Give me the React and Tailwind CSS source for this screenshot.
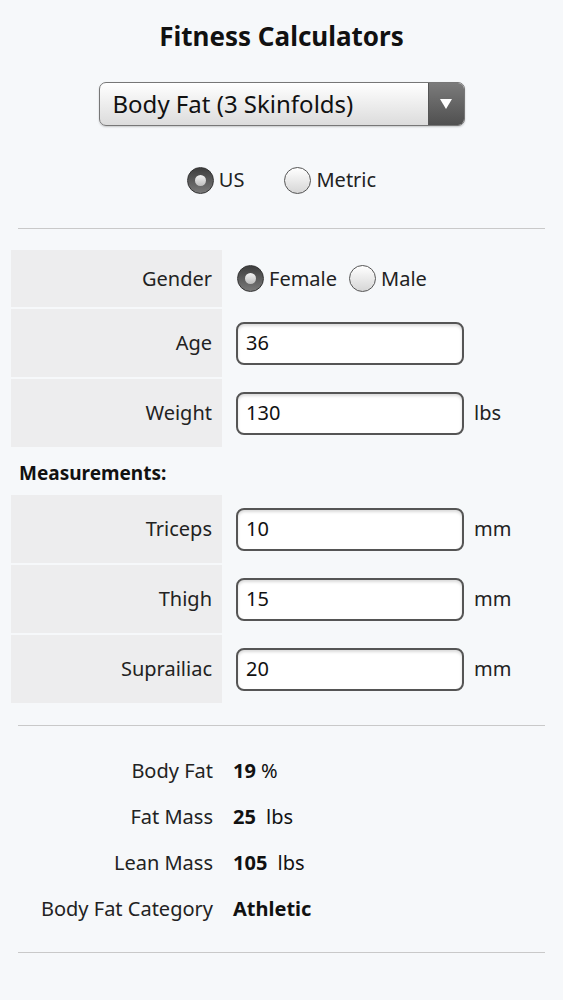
import React from "react";

const font = { fontFamily: '"Noto Sans", "DejaVu Sans", sans-serif' };

function Radio({ checked, label }) {
  return (
    <label className="flex items-center gap-[5px]">
      {checked ? (
        <span className="w-[27px] h-[27px] rounded-full bg-gradient-to-b from-[#3e3e3e] to-[#7a7a7a] border border-[#333] flex items-center justify-center">
          <span className="w-[11px] h-[11px] rounded-full bg-gradient-to-b from-[#f4f4f4] to-[#bdbdbd]" />
        </span>
      ) : (
        <span className="w-[27px] h-[27px] rounded-full bg-gradient-to-b from-[#ffffff] to-[#d6d6d6] border border-[#555]" />
      )}
      <span className="text-[20px] text-[#222]">{label}</span>
    </label>
  );
}

function InputRow({ label, value, unit }) {
  return (
    <div className="flex items-center">
      <div className="w-[211px] h-[68px] bg-[#ededee] flex items-center justify-end pr-[10px] text-[20px] text-[#222]">
        {label}
      </div>
      <div className="ml-[14px] w-[228px] h-[43px] rounded-[8px] border-2 border-[#555] bg-white shadow-[inset_0_2px_3px_rgba(0,0,0,0.15)] flex items-center pl-[8px] text-[20px] text-[#111]">
        {value}
      </div>
      {unit && <span className="ml-[10px] text-[20px] text-[#222]">{unit}</span>}
    </div>
  );
}

function Result({ label, value, unit }) {
  return (
    <div className="flex items-center h-[46px]">
      <div className="w-[213px] text-right text-[20px] text-[#222]">{label}</div>
      <div className="ml-[20px] text-[20px] text-[#111]">
        <span className="font-bold">{value}</span>
        {unit && <span className="ml-[5px]">{unit}</span>}
      </div>
    </div>
  );
}

export default function App() {
  return (
    <div className="min-h-[1000px] bg-[#f6f8fa] pt-[17px]" style={font}>
      <h1 className="text-center text-[26px] font-bold text-[#111] leading-[38px]">
        Fitness Calculators
      </h1>

      {/* calculator select */}
      <div className="mt-[27px] mx-auto w-[366px] h-[44px] rounded-[7px] border border-[#777] bg-gradient-to-b from-[#ffffff] to-[#dcdcdc] flex overflow-hidden shadow-[0_1px_2px_rgba(0,0,0,0.2)]">
        <div className="flex-1 flex items-center pl-[13px] text-[24px] text-[#111]">
          Body Fat (3 Skinfolds)
        </div>
        <div className="w-[36px] bg-gradient-to-b from-[#7b7b7b] to-[#505050] flex items-center justify-center border-l border-[#555]">
          <svg width="14" height="12" viewBox="0 0 14 12">
            <path d="M1 1 L13 1 L7 11 Z" fill="#fff" />
          </svg>
        </div>
      </div>

      <div className="mt-[39px] flex justify-center gap-[40px]">
        <Radio checked label="US" />
        <Radio label="Metric" />
      </div>

      <div className="mx-[18px] mt-[33px] border-t border-[#c9c9c9]" />

      <div className="mt-[21px] ml-[11px] flex flex-col gap-[2px]">
        <div className="flex items-center">
          <div className="w-[211px] h-[57px] bg-[#ededee] flex items-center justify-end pr-[10px] text-[20px] text-[#222]">
            Gender
          </div>
          <div className="ml-[15px] flex items-center gap-[12px]">
            <Radio checked label="Female" />
            <Radio label="Male" />
          </div>
        </div>
        <InputRow label="Age" value="36" />
        <InputRow label="Weight" value="130" unit="lbs" />
      </div>

      <div className="mt-[12px] ml-[19px] text-[19px] font-bold text-[#111] leading-[28px]">
        Measurements:
      </div>

      <div className="mt-[8px] ml-[11px] flex flex-col gap-[2px]">
        <InputRow label="Triceps" value="10" unit="mm" />
        <InputRow label="Thigh" value="15" unit="mm" />
        <InputRow label="Suprailiac" value="20" unit="mm" />
      </div>

      <div className="mx-[18px] mt-[22px] border-t border-[#c9c9c9]" />

      <div className="mt-[22px]">
        <Result label="Body Fat" value="19" unit="%" />
        <Result label="Fat Mass" value="25" unit=" lbs" />
        <Result label="Lean Mass" value="105" unit=" lbs" />
        <Result label="Body Fat Category" value="Athletic" />
      </div>

      <div className="mx-[18px] mt-[20px] border-t border-[#c9c9c9]" />
    </div>
  );
}
